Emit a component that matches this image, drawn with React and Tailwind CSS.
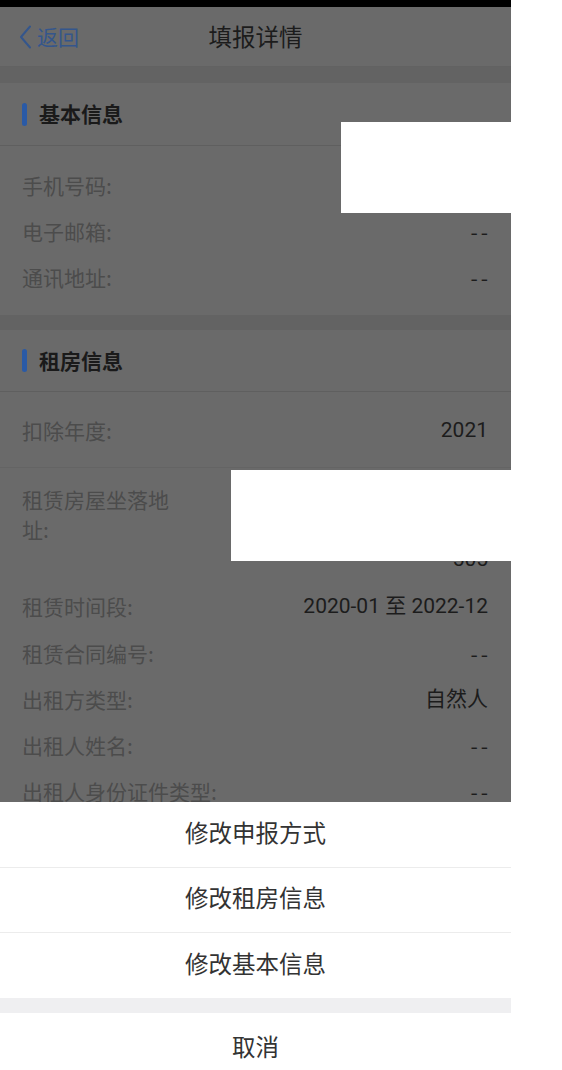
import React from "react";

const font = { fontFamily: '"Noto Sans CJK SC", "Noto Sans", sans-serif' };
const numFont = { fontFamily: 'Roboto, "Noto Sans CJK SC", sans-serif' };

function Row({ label, value, h = "h-[46.25px]" }) {
  const dash = value === "--";
  return (
    <div className={`flex ${h} items-center justify-between`}>
      <span className="text-[21px] text-[#4c4c4c]">{label}</span>
      {value ? (
        dash ? (
          <span className="mr-[-3px] text-[21px] tracking-[3px] text-[#1c1c1c]">{value}</span>
        ) : (
          <span className="text-[21px] text-[#1c1c1c]" style={numFont}>
            {value}
          </span>
        )
      ) : null}
    </div>
  );
}

function SectionHeader({ title, h }) {
  return (
    <div className={`${h} flex flex-col justify-center border-b border-[#5f5f5f]`}>
      <div className="flex items-center gap-[12px] px-[22px]">
        <span className="block h-[23px] w-[5px] rounded-full bg-[#2a5aa6]"></span>
        <span className="text-[21px] font-bold text-[#1a1a1a]">{title}</span>
      </div>
    </div>
  );
}

export default function App() {
  return (
    <div className="w-[562px] h-[1070px] bg-white" style={font}>
      <div className="relative w-[511px] h-[1070px] overflow-hidden bg-[#6a6a6a]">
        <div className="h-[7px] bg-black"></div>
        {/* Nav */}
        <div className="relative flex h-[60px] items-center px-[18px] border-b border-[#626262]">
          <div className="flex items-center gap-[5px] text-[#34568c]">
            <svg width="14" height="26" viewBox="0 0 14 26" fill="none">
              <path d="M12 2.5 L3 13 L12 23.5" stroke="#34568c" strokeWidth="2" strokeLinecap="round" strokeLinejoin="round" />
            </svg>
            <span className="text-[21px]">返回</span>
          </div>
          <div className="absolute left-0 right-0 text-center text-[23.5px] text-[#1c1c1c] pointer-events-none">填报详情</div>
        </div>
        <div className="h-[16px] bg-[#636363]"></div>

        {/* 基本信息 */}
        <SectionHeader title="基本信息" h="h-[63px]" />
        <div className="px-[22px] pr-[23px] pt-[17px] pb-[14px]">
          <Row label="手机号码:" h="h-[46px]" />
          <Row label="电子邮箱:" value="--" h="h-[46px]" />
          <Row label="通讯地址:" value="--" h="h-[46px]" />
        </div>
        <div className="h-[15px] bg-[#636363]"></div>

        {/* 租房信息 */}
        <SectionHeader title="租房信息" h="h-[62px]" />
        <div className="px-[22px] pr-[23px] pt-[16px] pb-[13px] border-b border-[#646464]">
          <Row label="扣除年度:" value="2021" h="h-[46px]" />
        </div>
        <div className="px-[22px] pr-[23px] pt-[8px]">
          <div className="flex justify-between pt-[8px] pb-[10px] leading-[30px]">
            <span className="w-[160px] text-[21px] text-[#4c4c4c]">租赁房屋坐落地址:</span>
            <div className="flex h-[90px] flex-col justify-end text-right text-[21px] text-[#1c1c1c]" style={numFont}>
              <span>505</span>
            </div>
          </div>
          <Row label="租赁时间段:" value="2020-01 至 2022-12" />
          <Row label="租赁合同编号:" value="--" />
          <Row label="出租方类型:" value="自然人" />
          <Row label="出租人姓名:" value="--" />
          <Row label="出租人身份证件类型:" value="--" />
        </div>

        {/* redaction boxes */}
        <div className="absolute left-[341px] top-[122px] h-[91px] w-[170px] bg-white"></div>
        <div className="absolute left-[231px] top-[470px] h-[91px] w-[280px] bg-white"></div>

        {/* Action sheet */}
        <div className="absolute bottom-0 left-0 right-0 bg-white text-[23.5px] text-[#333333]">
          <div className="flex h-[66px] items-center justify-center border-b border-[#ececec] pb-[3px]">修改申报方式</div>
          <div className="flex h-[65px] items-center justify-center border-b border-[#ececec] pb-[4px]">修改租房信息</div>
          <div className="flex h-[65px] items-center justify-center pb-[4px]">修改基本信息</div>
          <div className="h-[15px] bg-[#efeff1]"></div>
          <div className="flex h-[57px] items-center justify-center pt-[10px]">取消</div>
        </div>
      </div>
    </div>
  );
}
